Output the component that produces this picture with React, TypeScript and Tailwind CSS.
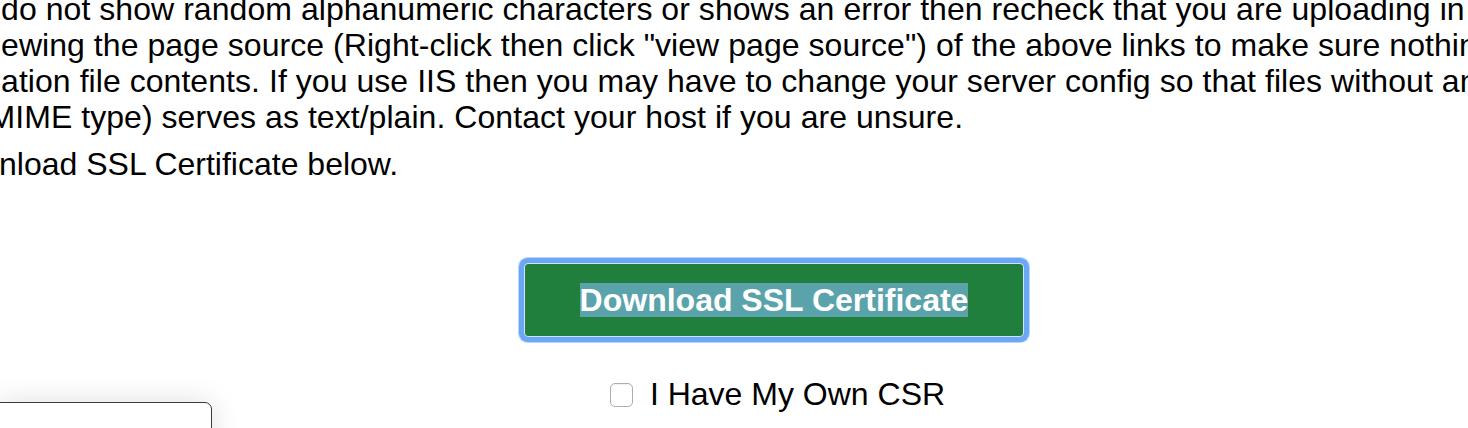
const lines = [
  "files do not show random alphanumeric characters or shows an error then recheck that you are uploading in the correct folder",
  "by viewing the page source (Right-click then click \"view page source\") of the above links to make sure nothing else",
  "validation file contents. If you use IIS then you may have to change your server config so that files without an extension",
  "as (MIME type) serves as text/plain. Contact your host if you are unsure.",
]

const App = () => {
  return (
    <div className="relative w-full h-[428px] overflow-hidden bg-white text-black font-['Liberation_Sans',Arial,sans-serif]">
      <div className="-ml-[65px] w-[1678px]">
        <div className="-mt-[9px] text-[32px] leading-[36px] whitespace-nowrap tracking-[0.05px]">
          {lines.map((line, i) => (
            <div key={i}>{line}</div>
          ))}
        </div>
        <p className="mt-[11px] text-[32px] leading-[36px] whitespace-nowrap">Download SSL Certificate below.</p>

        <div className="flex flex-col items-center">
          <button
            className="mt-[81px] w-[500px] h-[74px] flex items-center justify-center bg-[#217f3e] border border-[#d3e3f9] rounded-[4px] shadow-[0_0_0_5px_#6ca6f7,0_0_0_6px_#b9d4fb] text-white text-[32px] font-bold"
          >
            <span className="bg-[#5ba3ab] leading-[34px]">Download SSL Certificate</span>
          </button>

          <label className="mt-[39px] ml-[7px] flex items-center gap-[17px] text-[32px] leading-[36px]">
            <span className="w-[23px] h-[24px] mt-[2px] rounded-[5px] border border-[#adadad] bg-white shadow-[inset_0_1px_1px_rgba(0,0,0,0.06)]" />
            <span>I Have My Own CSR</span>
          </label>
        </div>
      </div>

      <div className="absolute left-[-1px] top-[402px] w-[213px] h-[60px] bg-white border border-[#3a3a3a] rounded-tr-[7px] shadow-[0_0_28px_rgba(0,0,0,0.13)]" />
    </div>
  )
}

export default App
